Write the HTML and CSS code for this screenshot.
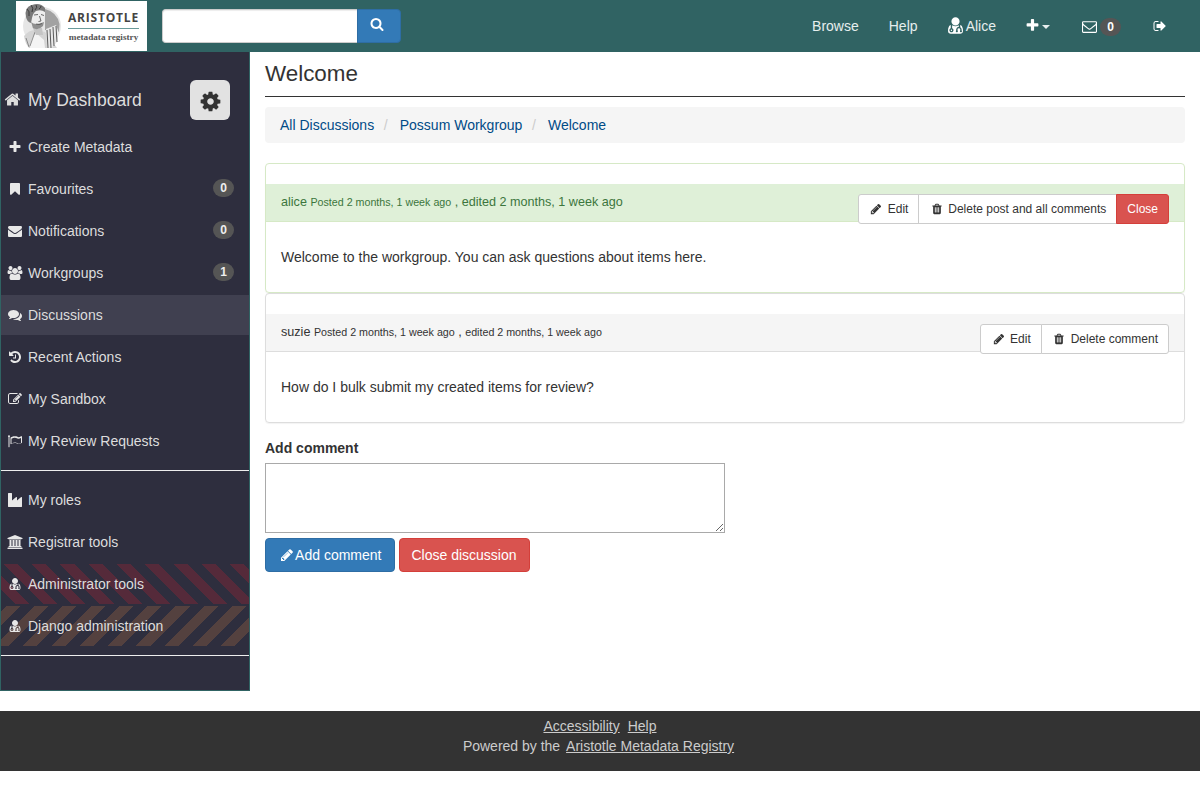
FILE: index.html
```html
<!DOCTYPE html>
<html lang="en">
<head>
    <meta charset="UTF-8">
    <title>Welcome - Aristotle Metadata Registry</title>
    <link rel="stylesheet" href="styles.css">
</head>
<body>
    <svg class="sprite" xmlns="http://www.w3.org/2000/svg">
        <symbol id="i-search" viewBox="0 0 1792 1792"><path d="M1216 832q0-185-131.5-316.5t-316.5-131.5-316.5 131.5-131.5 316.5 131.5 316.5 316.5 131.5 316.5-131.5 131.5-316.5zm512 832q0 52-38 90t-90 38q-54 0-90-38l-343-342q-179 124-399 124-143 0-273.5-55.5t-225-150-150-225-55.5-273.5 55.5-273.5 150-225 225-150 273.5-55.5 273.5 55.5 225 150 150 225 55.5 273.5q0 220-124 399l343 343q37 37 37 90z"/></symbol>
        <symbol id="i-plus" viewBox="0 0 1792 1792"><path d="M1600 736v192q0 40-28 68t-68 28h-416v416q0 40-28 68t-68 28h-192q-40 0-68-28t-28-68v-416h-416q-40 0-68-28t-28-68v-192q0-40 28-68t68-28h416v-416q0-40 28-68t68-28h192q40 0 68 28t28 68v416h416q40 0 68 28t28 68z"/></symbol>
        <symbol id="i-home" viewBox="0 0 1792 1792"><path d="M1472 992v480q0 26-19 45t-45 19h-384v-384h-256v384h-384q-26 0-45-19t-19-45v-480q0-1 .5-3t.5-3l575-474 575 474q1 2 1 6zm223-69l-62 74q-8 9-21 11h-3q-13 0-21-7l-692-577-692 577q-12 8-24 7-13-2-21-11l-62-74q-8-10-7-23.5t11-21.5l719-599q32-26 76-26t76 26l244 204v-195q0-14 9-23t23-9h192q14 0 23 9t9 23v408l219 182q10 8 11 21.5t-7 23.5z"/></symbol>
        <symbol id="i-cog" viewBox="0 0 1792 1792"><path d="M1152 896q0-106-75-181t-181-75-181 75-75 181 75 181 181 75 181-75 75-181zm512-109v222q0 12-8 23t-20 13l-185 28q-19 54-39 91 35 50 107 138 10 12 10 25t-9 23q-27 37-99 108t-94 71q-12 0-26-9l-138-108q-44 23-91 38-16 136-29 186-7 28-36 28h-222q-14 0-24.5-8.5t-11.5-21.5l-28-184q-49-16-90-37l-141 107q-10 9-25 9-14 0-25-11-126-114-165-168-7-10-7-23 0-12 8-23 15-21 51-66.5t54-70.5q-27-50-41-99l-183-27q-13-2-21-12.5t-8-23.5v-222q0-12 8-23t19-13l186-28q14-46 39-92-40-57-107-138-10-12-10-24 0-10 9-23 26-36 98.5-107.5t94.5-71.5q13 0 26 10l138 107q44-23 91-38 16-136 29-186 7-28 36-28h222q14 0 24.5 8.5t11.5 21.5l28 184q49 16 90 37l142-107q9-9 24-9 13 0 25 10 129 119 165 170 7 8 7 22 0 12-8 23-15 21-51 66.5t-54 70.5q26 50 41 98l183 28q13 2 21 12.5t8 23.5z"/></symbol>
        <symbol id="i-bookmark" viewBox="0 0 1792 1792"><path d="M1420 128q23 0 44 9 33 13 52.5 41t19.5 62v1289q0 34-19.5 62t-52.5 41q-19 8-44 8-48 0-83-32l-441-424-441 424q-36 33-83 33-23 0-44-9-33-13-52.5-41t-19.5-62v-1289q0-34 19.5-62t52.5-41q21-9 44-9h1048z"/></symbol>
        <symbol id="i-envelope" viewBox="0 0 1792 1792"><path d="M1792 710v794q0 66-47 113t-113 47h-1472q-66 0-113-47t-47-113v-794q44 49 101 87 362 246 497 345 57 42 92.5 65.5t94.5 48 110 24.5h2q51 0 110-24.5t94.5-48 92.5-65.5q170-123 498-345 57-39 100-87zm0-294q0 79-49 151t-122 123q-376 261-468 325-10 7-42.5 30.5t-54 38-52 32.5-57.5 27-50 9h-2q-23 0-50-9t-57.5-27-52-32.5-54-38-42.5-30.5q-91-64-262-182.5t-205-142.5q-62-42-117-115.5t-55-136.5q0-78 41.5-130t118.5-52h1472q65 0 112.5 47t47.5 113z"/></symbol>
        <symbol id="i-envelope-o" viewBox="0 0 1792 1792"><path d="M1664 1504v-768q-32 36-69 66-268 206-426 338-51 43-83 67t-86.5 48.5-102.5 24.5h-2q-48 0-102.5-24.5t-86.5-48.5-83-67q-158-132-426-338-37-30-69-66v768q0 13 9.5 22.5t22.5 9.5h1472q13 0 22.5-9.5t9.5-22.5zm0-1051v-24.5l-.5-13-3-12.5-5.5-9-9-7.5-14-2.5h-1472q-13 0-22.5 9.5t-9.5 22.5q0 168 147 284 193 152 401 317 6 5 35 29.5t46 37.5 44.5 31.5 50.5 27.5 43 9h2q20 0 43-9t50.5-27.5 44.5-31.5 46-37.5 35-29.5q208-165 401-317 54-43 100.5-115.5t46.5-131.5zm128-37v1088q0 66-47 113t-113 47h-1472q-66 0-113-47t-47-113v-1088q0-66 47-113t113-47h1472q66 0 113 47t47 113z"/></symbol>
        <symbol id="i-users" viewBox="0 0 1920 1792"><path d="M593 896q-162 5-265 128h-134q-82 0-138-40.5t-56-118.5q0-353 124-353 6 0 43.5 21t97.5 42.5 119 21.5q67 0 133-23-5 37-5 66 0 139 81 256zm1071 637q0 120-73 189.5t-194 69.5h-874q-121 0-194-69.5t-73-189.5q0-53 3.5-103.5t14-109 26.5-108.5 43-97.5 62-81 85.5-53.5 111.5-20q10 0 43 21.5t73 48 107 48 135 21.5 135-21.5 107-48 73-48 43-21.5q61 0 111.5 20t85.5 53.5 62 81 43 97.5 26.5 108.5 14 109 3.5 103.5zm-1024-1277q0 106-75 181t-181 75-181-75-75-181 75-181 181-75 181 75 75 181zm704 384q0 159-112.5 271.5t-271.5 112.5-271.5-112.5-112.5-271.5 112.5-271.5 271.5-112.5 271.5 112.5 112.5 271.5zm576 225q0 78-56 118.5t-138 40.5h-134q-103-123-265-128 81-117 81-256 0-29-5-66 66 23 133 23 59 0 119-21.5t97.5-42.5 43.5-21q124 0 124 353zm-128-609q0 106-75 181t-181 75-181-75-75-181 75-181 181-75 181 75 75 181z"/></symbol>
        <symbol id="i-comments" viewBox="0 0 1792 1792"><path d="M1408 768q0 139-94 257t-256.5 186.5-353.5 68.5q-86 0-176-16-124 88-278 128-36 9-86 16h-3q-11 0-20.5-8t-11.5-21q-1-3-1-6.5t.5-6.5 2-6l2.5-5 3.5-5.5 4-5 4.5-5 4-4.5q5-6 23-25t26-29.5 22.5-29 25-38.5 20.5-44q-124-72-195-177t-71-224q0-139 94-257t256.5-186.5 353.5-68.5 353.5 68.5 256.5 186.5 94 257zm384 256q0 120-71 224.5t-195 176.5q10 24 20.5 44t25 38.5 22.5 29 26 29.5 23 25q1 1 4 4.5t4.5 5 4 5 3.5 5.5l2.5 5 2 6 .5 6.5-1 6.5q-3 14-13 22t-22 7q-50-7-86-16-154-40-278-128-90 16-176 16-271 0-472-132 58 4 88 4 161 0 309-45t264-129q125-92 192-212t67-254q0-77-23-152 129 71 204 178t75 230z"/></symbol>
        <symbol id="i-history" viewBox="0 0 1792 1792"><path d="M1664 896q0 156-61 298t-164 245-245 164-298 61q-172 0-327-72.5t-264-204.5q-7-10-6.5-22.5t8.5-20.5l137-138q10-9 25-9 16 2 23 12 73 95 179 147t225 52q104 0 198.5-40.5t163.5-109.5 109.5-163.5 40.5-198.5-40.5-198.5-109.5-163.5-163.5-109.5-198.5-40.5q-98 0-188 35.5t-160 101.5l137 138q31 30 14 69-17 40-59 40h-448q-26 0-45-19t-19-45v-448q0-42 40-59 39-17 69 14l130 129q107-101 244.5-156.5t284.5-55.5q156 0 298 61t245 164 164 245 61 298zm-640-288v448q0 14-9 23t-23 9h-320q-14 0-23-9t-9-23v-64q0-14 9-23t23-9h224v-352q0-14 9-23t23-9h64q14 0 23 9t9 23z"/></symbol>
        <symbol id="i-edit" viewBox="0 0 1792 1792"><path d="M888 1184l116-116-152-152-116 116v56h96v96h56zm440-720q-16-16-33 1l-350 350q-17 17-1 33t33-1l350-350q17-17 1-33zm80 594v190q0 119-84.5 203.5t-203.5 84.5h-832q-119 0-203.5-84.5t-84.5-203.5v-832q0-119 84.5-203.5t203.5-84.5h832q63 0 117 25 15 7 18 23 3 17-9 29l-49 49q-14 14-32 8-23-6-45-6h-832q-66 0-113 47t-47 113v832q0 66 47 113t113 47h832q66 0 113-47t47-113v-126q0-13 9-22l64-64q15-15 35-7t20 29zm-96-738l288 288-672 672h-288v-288zm444 132l-92 92-288-288 92-92q28-28 68-28t68 28l152 152q28 28 28 68t-28 68z"/></symbol>
        <symbol id="i-flag" viewBox="0 0 1792 1792"><path d="M1664 1141v-616q-169 91-306 91-82 0-145-32-100-49-184-76.5t-178-27.5q-173 0-403 127v599q245-113 433-113 55 0 103.5 7.5t98 26 77 31 82.5 39.5l28 14q44 22 101 22 120 0 293-92zm-1408-869q0 35-17.5 64t-46.5 46v1266q0 14-9 23t-23 9h-64q-14 0-23-9t-9-23v-1266q-29-17-46.5-46t-17.5-64q0-53 37.5-90.5t90.5-37.5 90.5 37.5 37.5 90.5zm1536 64v763q0 39-35 57-10 5-17 9-218 116-369 116-88 0-158-35l-28-14q-64-33-99-48t-91-29-114-14q-102 0-235.5 44t-228.5 102q-15 9-33 9-16 0-32-8-32-19-32-56v-742q0-35 31-55 35-21 78.5-42.5t114-52 152.5-49.5 155-19q112 0 209 31t209 86q38 19 89 19 122 0 310-112 22-12 31-17 31-16 62 2 31 20 31 55z"/></symbol>
        <symbol id="i-industry" viewBox="0 0 1792 1792"><path d="M448 0q26 0 45 19t19 45v891l536-429q17-14 40-14 26 0 45 19t19 45v379l536-429q17-14 40-14 26 0 45 19t19 45v1152q0 26-19 45t-45 19h-1664q-26 0-45-19t-19-45v-1664q0-26 19-45t45-19h384z"/></symbol>
        <symbol id="i-bank" viewBox="0 0 1920 1792"><path d="M960 0l960 384v128h-128q0 26-20.5 45t-48.5 19h-1526q-28 0-48.5-19t-20.5-45h-128v-128zm-704 640h256v768h128v-768h256v768h128v-768h256v768h128v-768h256v768h59q28 0 48.5 19t20.5 45v64h-1664v-64q0-26 20.5-45t48.5-19h59v-768zm1595 960q28 0 48.5 19t20.5 45v128h-1920v-128q0-26 20.5-45t48.5-19h1782z"/></symbol>
        <symbol id="i-user-md" viewBox="0 0 1792 1792"><path d="M576 1344q0 26-19 45t-45 19-45-19-19-45 19-45 45-19 45 19 19 45zm1024 61q0 121-73 190t-194 69h-874q-121 0-194-69t-73-190q0-68 5.5-131t24-138 47.5-132.5 81-103 120-60.5q-22 52-22 120v203q-58 20-93 70t-35 111q0 80 56 136t136 56 136-56 56-136q0-61-35.5-111t-92.5-70v-203q0-62 25-93 132 104 295 104t295-104q25 31 25 93v64q-106 0-181 75t-75 181v89q-32 29-32 71 0 40 28 68t68 28 68-28 28-68q0-42-32-71v-89q0-52 38-90t90-38 90 38 38 90v89q-32 29-32 71 0 40 28 68t68 28 68-28 28-68q0-42-32-71v-89q0-68-34.5-127.5t-93.5-93.5q0-10 .5-42.5t0-48-2.5-41.5-7-47-13-40q68 15 120 60.5t81 103 47.5 132.5 24 138 5.5 131zm-320-893q0 159-112.5 271.5t-271.5 112.5-271.5-112.5-112.5-271.5 112.5-271.5 271.5-112.5 271.5 112.5 112.5 271.5z"/></symbol>
        <symbol id="i-pencil" viewBox="0 0 1792 1792"><path d="M491 1536l91-91-235-235-91 91v107h128v128h107zm523-928q0-22-22-22-10 0-17 7l-542 542q-7 7-7 17 0 22 22 22 10 0 17-7l542-542q7-7 7-17zm-54-192l416 416-832 832h-416v-416zm683 96q0 53-37 90l-166 166-416-416 166-165q36-38 90-38 53 0 91 38l235 234q37 39 37 91z"/></symbol>
        <symbol id="i-trash" viewBox="0 0 1792 1792"><path d="M704 1376v-704q0-14-9-23t-23-9h-64q-14 0-23 9t-9 23v704q0 14 9 23t23 9h64q14 0 23-9t9-23zm256 0v-704q0-14-9-23t-23-9h-64q-14 0-23 9t-9 23v704q0 14 9 23t23 9h64q14 0 23-9t9-23zm256 0v-704q0-14-9-23t-23-9h-64q-14 0-23 9t-9 23v704q0 14 9 23t23 9h64q14 0 23-9t9-23zm-544-992h448l-48-117q-7-9-17-11h-317q-10 2-17 11zm928 32v64q0 14-9 23t-23 9h-96v948q0 83-47 143.5t-113 60.5h-832q-66 0-113-58.5t-47-141.5v-952h-96q-14 0-23-9t-9-23v-64q0-14 9-23t23-9h309l70-167q15-37 54-63t79-26h320q40 0 79 26t54 63l70 167h309q14 0 23 9t9 23z"/></symbol>
        <symbol id="i-sign-out" viewBox="0 0 1792 1792"><path d="M704 1440q0 4 1 20t.5 26.5-3 23.5-10 19.5-20.5 6.5h-320q-119 0-203.5-84.5t-84.5-203.5v-704q0-119 84.5-203.5t203.5-84.5h320q13 0 22.5 9.5t9.5 22.5q0 4 1 20t.5 26.5-3 23.5-10 19.5-20.5 6.5h-320q-66 0-113 47t-47 113v704q0 66 47 113t113 47h312l11.5 1 11.5 3 8 5.5 7 9 2 13.5zm928-544q0 26-19 45l-544 544q-19 19-45 19t-45-19-19-45v-288h-448q-26 0-45-19t-19-45v-384q0-26 19-45t45-19h448v-288q0-26 19-45t45-19 45 19l544 544q19 19 19 45z"/></symbol>
    </svg>

    <nav class="navbar">
        <a class="logo" href="#">
            <svg class="logo-portrait" viewBox="0 0 44 48" xmlns="http://www.w3.org/2000/svg">
                <circle cx="21" cy="24" r="19" fill="#e6e6e6"/>
                <path d="M24 7 Q36 10 38.5 22 L38 30 L24 28Z" fill="#a2a2a2"/>
                <path d="M3 34 Q8 28 14 28 L24 30 L36 46 H8 Q4 41 3 34Z" fill="#d4d4d4"/>
                <path d="M9 46 Q10 36 15 31 L23 38 L24 46Z" fill="#f4f4f4"/>
                <path d="M5 36 L8 45 M14 30 L9 44" stroke="#777" stroke-width=".8" fill="none"/>
                <path d="M25 27 L35 23 L38 31 L36 40 L31 46 H26Z" fill="#e8e8e8"/>
                <path d="M26 28 L27 46 M29 27 L30 46 M32 25 L33 44 M35 24 L36 40" stroke="#5a5a5a" stroke-width="1" fill="none"/>
                <path d="M11 24 L21 26 L22 33 L15 33Z" fill="#c4c4c4"/>
                <path d="M7 12 Q9 3 16 3 Q23 3 24 11 L23 20 Q21 27 15 27 Q10 25 9 19Z" fill="#ededed"/>
                <path d="M5 15 Q3 5 11 3 Q19 0 24 6 L24 10 Q20 7 15 9 Q12 11 11 16 L10 21 Q6 20 5 15Z" fill="#7a7a7a"/>
                <path d="M6 7 Q9 9 8 14 M10 3 Q13 6 11 10 M15 3 Q17 5 14 8 M20 4 Q20 6 18 7" stroke="#333" stroke-width=".9" fill="none"/>
                <path d="M13 13 L17 12.5 M20 12.5 L23 13.5 M18.5 14 L20 19 L17.5 19.5" stroke="#4a4a4a" stroke-width=".8" fill="none"/>
                <path d="M10 20 Q14 24 23 20 L22 24 Q17 29 12 26Z" fill="#8f8f8f"/>
                <path d="M15 22 Q18 23.5 21 21.5" stroke="#4f4f4f" stroke-width=".7" fill="none"/>
            </svg>
            <span class="logo-text">
                <span class="logo-name">ARISTOTLE</span>
                <span class="logo-sub">metadata registry</span>
            </span>
        </a>
        <form class="search">
            <input class="search-input" type="text">
            <button class="search-btn" type="button"><svg class="icon"><use href="#i-search"/></svg></button>
        </form>
        <ul class="nav-links">
            <li><a href="#">Browse</a></li>
            <li><a href="#">Help</a></li>
            <li><a href="#"><svg class="icon icon-user"><use href="#i-user-md"/></svg> Alice</a></li>
            <li><a href="#"><svg class="icon icon-add"><use href="#i-plus"/></svg><span class="caret"></span></a></li>
            <li><a href="#"><svg class="icon icon-mail"><use href="#i-envelope-o"/></svg><span class="nav-badge">0</span></a></li>
            <li><a href="#"><svg class="icon icon-out"><use href="#i-sign-out"/></svg></a></li>
        </ul>
    </nav>

    <div class="wrapper">
        <aside class="sidebar">
            <div class="side-head">
                <span class="side-title"><svg class="icon"><use href="#i-home"/></svg>My Dashboard</span>
                <button class="cog" type="button"><svg class="icon"><use href="#i-cog"/></svg></button>
            </div>
            <ul class="side-menu">
                <li><a href="#"><svg class="icon"><use href="#i-plus"/></svg>Create Metadata</a></li>
                <li><a href="#"><svg class="icon"><use href="#i-bookmark"/></svg>Favourites<span class="badge">0</span></a></li>
                <li><a href="#"><svg class="icon"><use href="#i-envelope"/></svg>Notifications<span class="badge">0</span></a></li>
                <li><a href="#"><svg class="icon"><use href="#i-users"/></svg>Workgroups<span class="badge">1</span></a></li>
                <li class="active"><a href="#"><svg class="icon"><use href="#i-comments"/></svg>Discussions</a></li>
                <li><a href="#"><svg class="icon"><use href="#i-history"/></svg>Recent Actions</a></li>
                <li><a href="#"><svg class="icon"><use href="#i-edit"/></svg>My Sandbox</a></li>
                <li><a href="#"><svg class="icon"><use href="#i-flag"/></svg>My Review Requests</a></li>
            </ul>
            <hr class="side-rule">
            <ul class="side-menu">
                <li><a href="#"><svg class="icon"><use href="#i-industry"/></svg>My roles</a></li>
                <li><a href="#"><svg class="icon"><use href="#i-bank"/></svg>Registrar tools</a></li>
                <li class="stripe-red"><a href="#"><svg class="icon"><use href="#i-user-md"/></svg>Administrator tools</a></li>
                <li class="stripe-brown"><a href="#"><svg class="icon"><use href="#i-user-md"/></svg>Django administration</a></li>
            </ul>
            <hr class="side-rule">
        </aside>

        <main class="content">
            <h1 class="page-title">Welcome</h1>
            <ol class="breadcrumb">
                <li><a href="#">All Discussions</a></li>
                <li><a href="#">Possum Workgroup</a></li>
                <li><a href="#">Welcome</a></li>
            </ol>

            <div class="panel panel-success">
                <div class="panel-heading">
                    <span>alice <small>Posted 2 months, 1 week ago</small> , edited 2 months, 1 week ago</span>
                    <div class="btn-group">
                        <a class="btn" href="#"><svg class="icon"><use href="#i-pencil"/></svg> Edit</a>
                        <a class="btn" href="#"><svg class="icon"><use href="#i-trash"/></svg> Delete post and all comments</a>
                        <a class="btn btn-danger" href="#">Close</a>
                    </div>
                </div>
                <div class="panel-body">Welcome to the workgroup. You can ask questions about items here.</div>
            </div>

            <div class="panel">
                <div class="panel-heading">
                    <span>suzie <small>Posted 2 months, 1 week ago</small> , <small>edited 2 months, 1 week ago</small></span>
                    <div class="btn-group">
                        <a class="btn" href="#"><svg class="icon"><use href="#i-pencil"/></svg> Edit</a>
                        <a class="btn" href="#"><svg class="icon"><use href="#i-trash"/></svg> Delete comment</a>
                    </div>
                </div>
                <div class="panel-body">How do I bulk submit my created items for review?</div>
            </div>

            <form class="comment-form">
                <label class="comment-label" for="comment">Add comment</label>
                <textarea class="comment-box" id="comment"></textarea>
                <div class="comment-actions">
                    <button class="big-btn big-primary" type="button"><svg class="icon"><use href="#i-pencil"/></svg> Add comment</button>
                    <button class="big-btn big-danger" type="button">Close discussion</button>
                </div>
            </form>
        </main>
    </div>

    <footer class="footer">
        <div><a href="#">Accessibility</a><a href="#">Help</a></div>
        <div>Powered by the <a class="footer-home" href="#">Aristotle Metadata Registry</a></div>
    </footer>
</body>
</html>
```

FILE: styles.css
```css
/* General */
* {
    box-sizing: border-box;
}

body {
    margin: 0;
    font-family: "Liberation Sans", Arial, sans-serif;
    font-size: 14px;
    line-height: 20px;
    color: #333;
    background: #fff;
}

a {
    text-decoration: none;
}

ul, ol {
    list-style: none;
    margin: 0;
    padding: 0;
}

.sprite {
    display: none;
}

.icon {
    width: 14px;
    height: 14px;
    fill: currentColor;
    vertical-align: -2px;
}

/* Top bar */
.navbar {
    display: flex;
    align-items: flex-start;
    height: 52px;
    background: #306363;
    padding-left: 16px;
}

.logo {
    display: flex;
    align-items: center;
    width: 131px;
    height: 50px;
    margin-top: 1px;
    padding: 0 8px 0 5px;
    background: #fff;
}

.logo-portrait {
    width: 44px;
    height: 48px;
    flex-shrink: 0;
}

.logo-text {
    display: flex;
    flex-direction: column;
    align-items: center;
    margin-left: 3px;
    flex: 1;
}

.logo-name {
    width: 100%;
    font-family: "Open Sans", sans-serif;
    font-size: 12px;
    font-weight: 700;
    line-height: 15px;
    letter-spacing: 0.8px;
    white-space: nowrap;
    color: #444;
    border-bottom: 1px solid #6a9a9a;
    padding-bottom: 3px;
    margin-bottom: 2px;
}

.logo-sub {
    font-family: "Liberation Serif", serif;
    font-size: 9.2px;
    font-weight: 700;
    line-height: 12px;
    color: #555;
    white-space: nowrap;
}

.search {
    display: flex;
    margin: 9px 0 0 15px;
}

.search-input {
    width: 195px;
    height: 34px;
    border: 1px solid #ccc;
    border-right: 0;
    border-radius: 4px 0 0 4px;
    box-shadow: inset 0 1px 1px rgba(0, 0, 0, 0.075);
}

.search-btn {
    width: 44px;
    height: 34px;
    padding: 0 5px 2px 0;
    border: 1px solid #2e6da4;
    border-radius: 0 4px 4px 0;
    background: #337ab7;
    color: #fff;
}

.search-btn .icon {
    vertical-align: 0;
}

.nav-links {
    display: flex;
    margin-left: auto;
    padding-right: 18px;
}

.nav-links a {
    display: block;
    padding: 16px 15px;
    color: #e6eeee;
}

.nav-links .icon {
    color: #fff;
}

.nav-links li:nth-child(n+5) {
    margin-left: 2px;
}

.icon-user {
    width: 19px;
    height: 19px;
    margin: -2px -2px 0 -2px;
    vertical-align: -4px;
}

.icon-add {
    width: 15px;
    height: 15px;
    margin-left: -1px;
    vertical-align: -2px;
}

.icon-mail {
    width: 15px;
    height: 15px;
    margin-right: 1px;
    vertical-align: -3px;
}

.caret {
    display: inline-block;
    margin-left: 2px;
    vertical-align: 2px;
    border-top: 4px solid #e6eeee;
    border-left: 4px solid transparent;
    border-right: 4px solid transparent;
}

.nav-badge {
    display: inline-block;
    min-width: 21px;
    margin-left: 2px;
    padding: 3px 7px;
    font-size: 12px;
    font-weight: 700;
    line-height: 12px;
    text-align: center;
    color: #fff;
    background: #555;
    border-radius: 10px;
}

/* Page */
.wrapper {
    display: flex;
    align-items: flex-start;
}

/* Sidebar */
.sidebar {
    flex: 0 0 250px;
    height: 639px;
    background: #2e2e3e;
    border: 1px solid #306363;
    border-top: 0;
    color: #ddd;
}

.side-head {
    display: flex;
    justify-content: space-between;
    align-items: center;
    height: 75px;
    padding: 28px 19px 7px 3px;
}

.side-title {
    font-size: 17.5px;
}

.side-title .icon {
    width: 17px;
    height: 17px;
    margin-right: 7px;
    vertical-align: -2px;
}

.cog {
    display: flex;
    align-items: center;
    justify-content: center;
    width: 40px;
    height: 40px;
    padding: 2px 0 0;
    border: 0;
    border-radius: 6px;
    background: #e2e2e2;
    color: #333;
}

.cog .icon {
    width: 23px;
    height: 23px;
}

.side-menu li {
    height: 40px;
    margin-bottom: 2px;
}

.side-menu a {
    display: flex;
    align-items: center;
    height: 100%;
    padding-right: 15px;
    color: #ddd;
}

.side-menu .icon {
    flex: 0 0 16px;
    height: 14px;
    margin: 0 5px 0 6px;
    color: #e8e8e8;
}

.side-menu .active {
    background: #404050;
}

.stripe-red {
    background: repeating-linear-gradient(45deg, #2e2e3e 0 10px, #552a3a 10px 20px);
}

.stripe-brown {
    background: repeating-linear-gradient(-45deg, #2e2e3e 0 10px, #54413f 10px 20px);
}

.badge {
    margin-left: auto;
    min-width: 21px;
    padding: 3px 7px;
    font-size: 12px;
    font-weight: 700;
    line-height: 12px;
    text-align: center;
    color: #eee;
    background: #555;
    border-radius: 10px;
    position: relative;
    top: -1px;
}

.side-rule {
    margin: 9px 0;
    border: 0;
    border-top: 1px solid #eee;
}

/* Main column */
.content {
    flex: 1;
    padding: 0 15px;
}

.page-title {
    margin: 0 0 10px;
    height: 45px;
    padding-top: 9px;
    font-size: 22.4px;
    font-weight: 400;
    line-height: 26px;
    border-bottom: 1px solid #333;
}

.breadcrumb {
    display: flex;
    height: 36px;
    align-items: center;
    margin-bottom: 20px;
    padding: 0 15px;
    background: #f5f5f5;
    border-radius: 4px;
}

.breadcrumb a {
    color: #004b87;
}

.breadcrumb li + li::before {
    content: "/";
    padding: 0 12px 0 9.7px;
    color: #ccc;
}

/* Posts */
.panel {
    height: 130px;
    padding-top: 20px;
    border: 1px solid #ddd;
    border-radius: 4px;
    box-shadow: 0 1px 1px rgba(0, 0, 0, 0.05);
}

.panel-heading {
    display: flex;
    justify-content: space-between;
    align-items: flex-start;
    height: 38px;
    padding: 11px 15px 0;
    font-size: 12.6px;
    line-height: 15px;
    background: #f5f5f5;
    border-bottom: 1px solid #ddd;
}

.panel-heading small {
    font-size: 10.7px;
}

.panel-success {
    border-color: #d6e9c6;
}

.panel-success .panel-heading {
    color: #3c763d;
    background: #dff0d8;
    border-color: #d6e9c6;
}

.panel-body {
    padding: 25px 15px;
}

.btn-group {
    display: flex;
    margin-top: -1px;
}

.btn {
    height: 30px;
    padding: 5px 10px 5px 11.5px;
    margin-left: -1px;
    font-size: 12px;
    line-height: 18px;
    color: #333;
    background: #fff;
    border: 1px solid #ccc;
}

.btn .icon {
    width: 12px;
    height: 12px;
    margin-right: 2px;
}

.btn:first-child {
    border-radius: 3px 0 0 3px;
}

.btn:last-child {
    border-radius: 0 3px 3px 0;
}

.btn-danger {
    padding-left: 10px;
    color: #fff;
    background: #d9534f;
    border-color: #d43f3a;
}

/* Comment form */
.comment-form {
    margin-top: 15px;
}

.comment-label {
    display: block;
    font-weight: 700;
    margin-bottom: 5px;
}

.comment-box {
    display: block;
    width: 460px;
    height: 70px;
    border: 1px solid #a9a9a9;
}

.comment-actions {
    display: flex;
    gap: 4px;
    margin-top: 5px;
}

.big-btn {
    height: 34px;
    padding: 0 12px;
    font-family: inherit;
    font-size: 14px;
    color: #fff;
    border-radius: 4px;
    border: 1px solid;
}

.big-primary {
    background: #337ab7;
    border-color: #2e6da4;
    padding: 0 12px 0 14px;
}

.big-primary .icon {
    margin-right: -2px;
}

.big-danger {
    background: #d9534f;
    border-color: #d43f3a;
}

/* Footer */
.footer {
    height: 60px;
    margin-top: 20px;
    padding-top: 5px;
    text-align: center;
    color: #ccc;
    background: #333;
}

.footer a {
    color: #ccc;
    text-decoration: underline;
}

.footer a + a {
    margin-left: 8px;
}

.footer-home {
    margin: 0 3px 0 2px;
}
```
